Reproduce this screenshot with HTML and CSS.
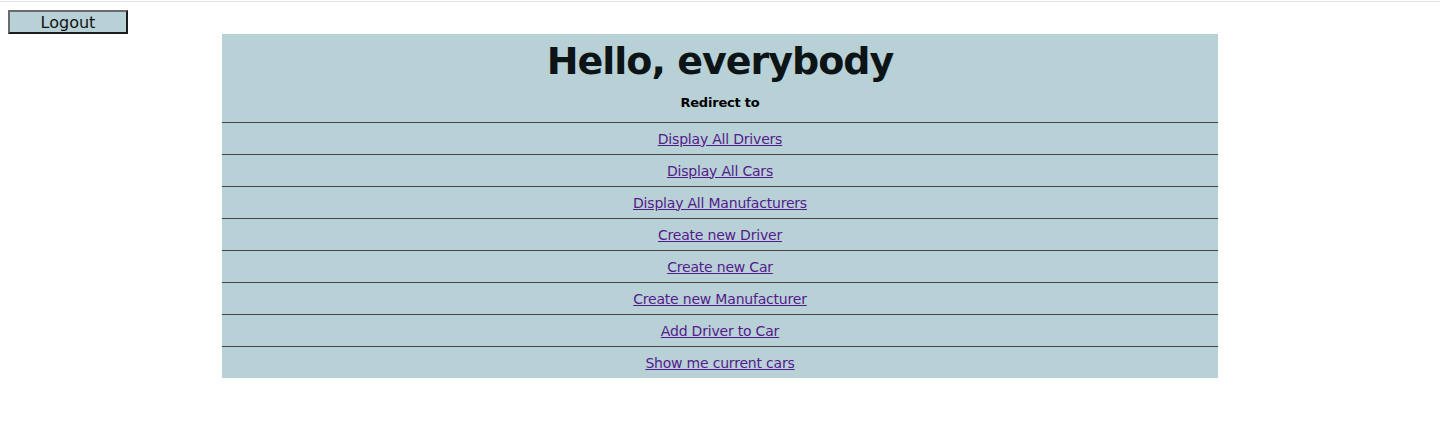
FILE: index.html
```html
<!DOCTYPE html>
<html>
<head>
<meta charset="utf-8">
<title>Home</title>
<link rel="stylesheet" href="styles.css">
</head>
<body>
<div class="topline"></div>
<div class="page">
  <div class="bar"><button class="logout">Logout</button></div>
  <div class="panel">
    <div class="head">
      <h1>Hello, everybody</h1>
      <div class="sub">Redirect to</div>
    </div>
    <div class="row"><a href="#">Display All Drivers</a></div>
    <div class="row"><a href="#">Display All Cars</a></div>
    <div class="row"><a href="#">Display All Manufacturers</a></div>
    <div class="row"><a href="#">Create new Driver</a></div>
    <div class="row"><a href="#">Create new Car</a></div>
    <div class="row"><a href="#">Create new Manufacturer</a></div>
    <div class="row"><a href="#">Add Driver to Car</a></div>
    <div class="row"><a href="#">Show me current cars</a></div>
  </div>
</div>
</body>
</html>
```
FILE: styles.css
```css
html, body {
  margin: 0;
  padding: 0;
  background: #fff;
  font-family: "DejaVu Sans", Verdana, sans-serif;
}
.topline {
  height: 1px;
  margin-top: 1px;
  background: #e3e3e3;
}
.page {
  padding: 8px 8px 0 8px;
}
.bar {
  height: 24px;
}
.logout {
  display: block;
  width: 120px;
  height: 24px;
  margin: 0;
  padding: 2px 0 0 0;
  background: #b7d1d6;
  border: 2px solid;
  border-color: #6b6b6b #1c1c1c #1c1c1c #6b6b6b;
  font-family: "DejaVu Sans", Verdana, sans-serif;
  font-size: 16px;
  color: #111;
  line-height: 18px;
}
.panel {
  width: 70%;
  margin: 0 auto;
  background: #b7d1d6;
}
.head {
  height: 88px;
  display: flex;
  flex-direction: column;
  align-items: center;
}
h1 {
  margin: 0;
  padding-top: 3px;
  font-size: 38px;
  letter-spacing: -1px;
  line-height: 48px;
  font-weight: bold;
  color: #0c1416;
}
.sub {
  margin-top: 9px;
  font-size: 13px;
  letter-spacing: -0.2px;
  font-weight: bold;
  color: #000;
  line-height: 18px;
}
.row {
  border-top: 1px solid #444;
  height: 31px;
  display: flex;
  align-items: center;
  justify-content: center;
  font-size: 14px;
  letter-spacing: -0.2px;
}
.row a {
  color: #551a8b;
  text-decoration: underline;
}
```
